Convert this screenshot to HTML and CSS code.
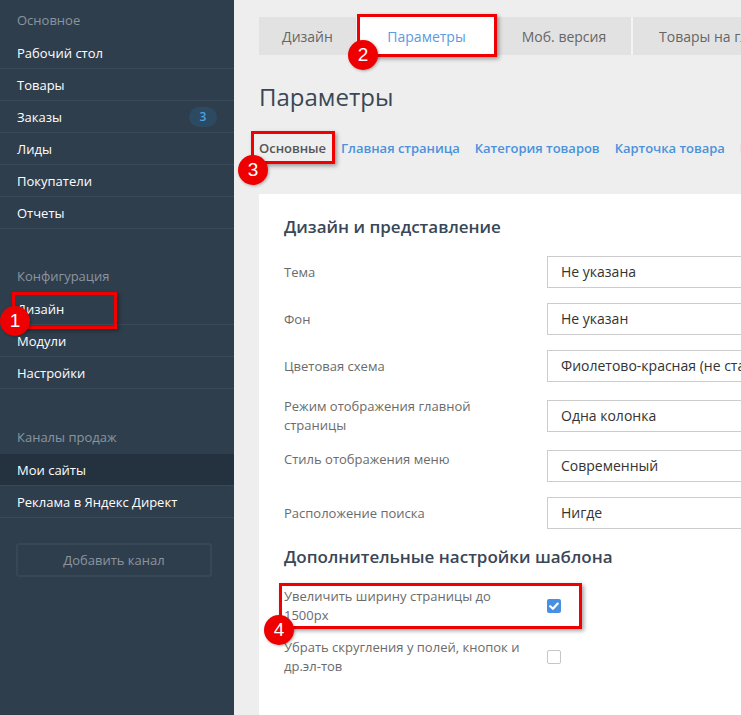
FILE: index.html
```html
<!DOCTYPE html>
<html lang="ru">
<head>
<meta charset="utf-8">
<title>Параметры</title>
<link rel="stylesheet" href="styles.css">
</head>
<body>
<div class="page">
  <aside class="sidebar">
    <div class="nav-section">
      <div class="nav-title">Основное</div>
      <a class="nav-item">Рабочий стол</a>
      <a class="nav-item">Товары</a>
      <a class="nav-item">Заказы <span class="badge">3</span></a>
      <a class="nav-item">Лиды</a>
      <a class="nav-item">Покупатели</a>
      <a class="nav-item">Отчеты</a>
    </div>
    <div class="nav-section">
      <div class="nav-title">Конфигурация</div>
      <a class="nav-item">Дизайн</a>
      <a class="nav-item">Модули</a>
      <a class="nav-item">Настройки</a>
    </div>
    <div class="nav-section nav-section--channels">
      <div class="nav-title">Каналы продаж</div>
      <a class="nav-item nav-item--active">Мои сайты</a>
      <a class="nav-item">Реклама в Яндекс Директ</a>
    </div>
    <button class="add-channel">Добавить канал</button>
  </aside>

  <main class="main">
    <div class="main-inner">
      <nav class="tabs">
        <a class="tab tab--design">Дизайн</a>
        <a class="tab tab--params tab--active">Параметры</a>
        <a class="tab tab--mobile">Моб. версия</a>
        <a class="tab tab--goods">Товары на главной</a>
      </nav>

      <h1 class="page-title">Параметры</h1>

      <nav class="subtabs">
        <a class="subtab subtab--active">Основные</a>
        <a class="subtab">Главная страница</a>
        <a class="subtab">Категория товаров</a>
        <a class="subtab">Карточка товара</a>
        <a class="subtab">Корзина</a>
      </nav>

      <section class="card">
        <h2 class="card-title">Дизайн и представление</h2>

        <div class="form-row">
          <label class="form-label">Тема</label>
          <div class="select">Не указана</div>
        </div>
        <div class="form-row">
          <label class="form-label">Фон</label>
          <div class="select">Не указан</div>
        </div>
        <div class="form-row">
          <label class="form-label">Цветовая схема</label>
          <div class="select">Фиолетово-красная (не стандартная)</div>
        </div>
        <div class="form-row">
          <label class="form-label">Режим отображения главной страницы</label>
          <div class="select">Одна колонка</div>
        </div>
        <div class="form-row form-row--top">
          <label class="form-label">Стиль отображения меню</label>
          <div class="select">Современный</div>
        </div>
        <div class="form-row">
          <label class="form-label">Расположение поиска</label>
          <div class="select">Нигде</div>
        </div>

        <h2 class="card-title card-title--second">Дополнительные настройки шаблона</h2>

        <div class="form-row form-row--check">
          <label class="form-label">Увеличить ширину страницы до 1500px</label>
          <span class="checkbox checkbox--on">
            <svg viewBox="0 0 14 14" width="14" height="14"><path d="M3.2 7.2 L5.9 9.8 L10.8 4.6" fill="none" stroke="#fff" stroke-width="2.2" stroke-linecap="round" stroke-linejoin="round"/></svg>
          </span>
        </div>
        <div class="form-row form-row--check">
          <label class="form-label">Убрать скругления у полей, кнопок и др.эл-тов</label>
          <span class="checkbox"></span>
        </div>
      </section>
    </div>
  </main>

  <div class="mark mark-box mark-box--1"></div>
  <div class="mark mark-num mark-num--1">1</div>
  <div class="mark mark-box mark-box--2"></div>
  <div class="mark mark-num mark-num--2">2</div>
  <div class="mark mark-box mark-box--3"></div>
  <div class="mark mark-num mark-num--3">3</div>
  <div class="mark mark-box mark-box--4"></div>
  <div class="mark mark-num mark-num--4">4</div>
</div>
</body>
</html>
```

FILE: styles.css
```css
* { box-sizing: border-box; }

html, body {
  margin: 0;
  padding: 0;
  height: 715px;
  overflow: hidden;
}

body {
  font-family: "Open Sans", "Noto Sans", "DejaVu Sans", sans-serif;
  font-size: 13px;
  background: #eeeeee;
}

.page {
  position: relative;
  display: flex;
  width: 741px;
  height: 715px;
  overflow: hidden;
}

/* ---------- sidebar ---------- */
.sidebar {
  width: 234px;
  flex-shrink: 0;
  background: #2f3e4d;
  display: flex;
  flex-direction: column;
}

.nav-section + .nav-section {
  margin-top: 27px;
}

.nav-section--channels {
  padding-top: 1px;
}

.nav-title {
  padding: 11px 17px 7px;
  line-height: 19px;
  color: #8b959f;
  font-size: 13px;
}

.nav-item {
  display: flex;
  align-items: center;
  justify-content: space-between;
  height: 32px;
  padding: 0 17px;
  border-bottom: 1px solid #3a4958;
  color: #ffffff;
  font-size: 13px;
  text-decoration: none;
}

.nav-item--active {
  background: #243240;
}

.badge {
  display: inline-flex;
  align-items: center;
  justify-content: center;
  width: 28px;
  height: 20px;
  border-radius: 10px;
  background: #2c4a62;
  color: #4aa3e8;
  font-size: 12px;
  font-weight: 600;
}

.add-channel {
  margin: 25px 22px 0 16px;
  height: 34px;
  border: 2px solid #384756;
  border-radius: 3px;
  background: transparent;
  color: #8b959f;
  font-family: inherit;
  font-size: 13px;
}

/* ---------- main ---------- */
.main {
  flex: 1;
  min-width: 0;
  overflow: hidden;
  background: #eeeeee;
}

.main-inner {
  width: 900px;
  padding: 17px 0 0 25px;
}

.tabs {
  display: flex;
  height: 38px;
}

.tab {
  display: flex;
  align-items: center;
  justify-content: center;
  background: #e2e2e2;
  color: #666666;
  font-size: 14px;
  white-space: nowrap;
}

.tab--design { width: 97px; }
.tab--params { width: 141px; }
.tab--mobile { width: 134px; }
.tab--goods {
  padding: 0 26px;
  border-left: 2px solid #f4f4f4;
}

.tab--active {
  background: #ffffff;
  color: #5b9be0;
}

.page-title {
  margin: 26px 0 0;
  font-size: 24px;
  line-height: 32px;
  font-weight: 400;
  color: #3a4756;
}

.subtabs {
  display: flex;
  gap: 15px;
  margin-top: 26px;
  line-height: 18px;
  white-space: nowrap;
}

.subtab {
  font-size: 13px;
  font-weight: 600;
  letter-spacing: -0.03px;
  color: #4a92dc;
}

.subtab--active {
  color: #555555;
}

/* ---------- card ---------- */
.card {
  margin-top: 37px;
  background: #ffffff;
  padding: 22px 25px 40px;
  min-height: 530px;
}

.card-title {
  margin: 0 0 18px;
  font-size: 17px;
  line-height: 22px;
  font-weight: 600;
  color: #3a4756;
}

.card-title--second {
  margin-top: 17px;
  margin-bottom: 19px;
}

.form-row {
  display: flex;
  align-items: center;
  margin-bottom: 15px;
}

.form-row--top {
  align-items: flex-start;
}

.form-row--check {
  margin-bottom: 13px;
}

.form-label {
  width: 242px;
  margin-right: 21px;
  flex-shrink: 0;
  font-size: 13px;
  line-height: 19px;
  color: #6b6b6b;
}

.select {
  width: 340px;
  height: 32px;
  border: 1px solid #cccccc;
  padding: 0 13px;
  font-size: 14px;
  line-height: 30px;
  color: #333333;
  white-space: nowrap;
  overflow: hidden;
}

.checkbox {
  display: inline-flex;
  width: 14px;
  height: 14px;
  border: 1px solid #c6c6c6;
  border-radius: 2px;
  background: #ffffff;
}

.checkbox--on {
  border: none;
  background: #4a90e2;
}

/* ---------- annotations (overlay) ---------- */
.mark {
  position: absolute;
}

.mark-box {
  border: 3px solid #f00000;
  box-shadow: 2px 2px 4px rgba(0, 0, 0, 0.35);
}

.mark-box--1 { left: 12px;  top: 292px; width: 105px; height: 37px; }
.mark-box--2 { left: 357px; top: 14px;  width: 140px; height: 43px; }
.mark-box--3 { left: 251px; top: 131px; width: 84px;  height: 33px; }
.mark-box--4 { left: 279px; top: 583px; width: 303px; height: 46px; }

.mark-num {
  width: 30px;
  height: 30px;
  border-radius: 50%;
  background: #ee0000;
  color: #ffffff;
  font-family: "Liberation Sans", Arial, sans-serif;
  font-size: 19px;
  line-height: 30px;
  text-align: center;
  box-shadow: 1px 1px 3px rgba(0, 0, 0, 0.3);
}

.mark-num--1 { left: 0;     top: 306px; }
.mark-num--2 { left: 348px; top: 40px; }
.mark-num--3 { left: 238px; top: 155px; }
.mark-num--4 { left: 264px; top: 615px; }
```
